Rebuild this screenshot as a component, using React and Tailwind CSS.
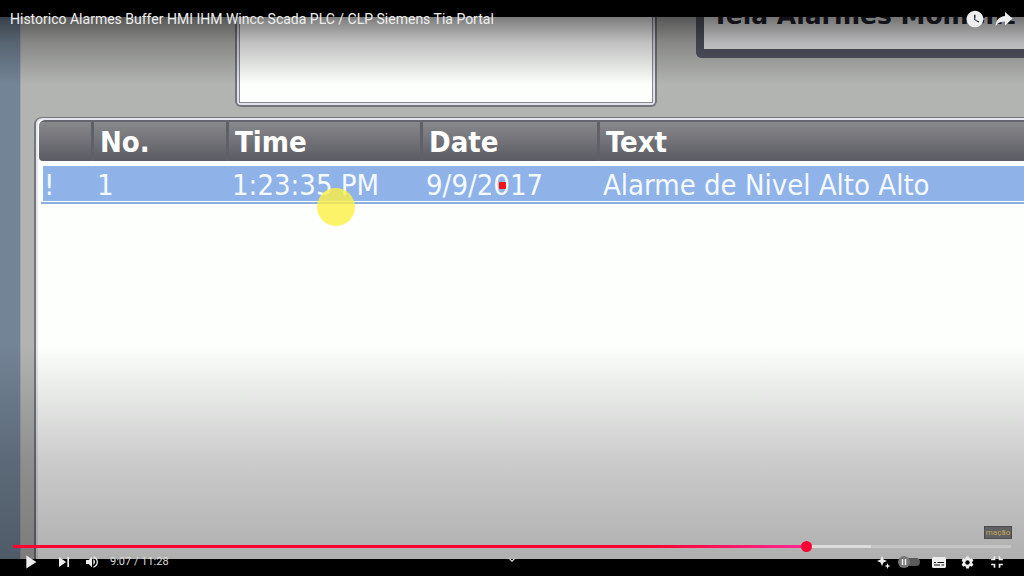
import React, { useState } from 'react';
import { MdSkipNext, MdVolumeUp, MdSettings, MdFullscreenExit, MdPlayArrow, MdWatchLater, MdOutlineKeyboardArrowDown } from 'react-icons/md';

const columns = [
  { label: '', width: 'w-[52px]' },
  { label: 'No.', width: 'w-[135px]' },
  { label: 'Time', width: 'w-[194px]' },
  { label: 'Date', width: 'w-[177px]' },
  { label: 'Text', width: '' },
];

const alarms = [['!', '1', '1:23:35 PM', '9/9/2017', 'Alarme de Nivel Alto Alto']];

function AlarmTable() {
  return (
    <div className="ml-[13px] flex-1 rounded-tl-lg border-t border-l-2 border-[#74767c] bg-[#74767c]">
      <div className="h-full rounded-tl-md border-t-2 border-l-2 border-[#e6e6ee] bg-[#fdfffd] pl-px">
        <div className="h-full rounded-tl-md border-t-2 border-[#66676e]">
          <table className="w-full table-fixed border-separate border-spacing-0 text-left text-[29px] whitespace-nowrap">
            <thead className="leading-[37px] text-white">
              <tr>
                {columns.map((col, i) => (
                  <th
                    key={i}
                    scope="col"
                    className={`bg-linear-to-b from-[#88898c] to-[#5b5b63] p-0 pt-[2px] font-bold ${col.width} ${
                      i === 0 ? 'rounded-tl-sm rounded-bl-sm' : 'border-l-3 border-[#606168] pl-[6px]'
                    }`}
                  >
                    {col.label}
                  </th>
                ))}
              </tr>
            </thead>
            <tbody className="leading-[32px] text-[#f4faff]">
              {alarms.map((row) => (
                <tr key={row[1]}>
                  {row.map((cell, i) => (
                    <td
                      key={i}
                      className={`border-t-5 border-[#fdfffd] bg-[#8fb3e8] p-0 pt-[3px] ${
                        i === 0 ? 'border-l-4 pl-[1px]' : 'pl-[6px]'
                      }`}
                    >
                      {cell}
                    </td>
                  ))}
                </tr>
              ))}
            </tbody>
          </table>
          <div className="mt-[1px] ml-[2px] h-[2px] bg-[#8eafdc]" />
        </div>
      </div>
    </div>
  );
}

function Scene() {
  return (
    <div className="relative flex h-full overflow-hidden bg-[#b2b4b1] font-['DejaVu_Sans_Condensed','DejaVu_Sans',sans-serif]">
      <div className="w-[21px] shrink-0 border-r border-[#98a4b4] bg-[#738496]" />
      <div className="flex min-w-0 flex-1 flex-col">
        <div className="flex h-[100px] shrink-0 items-start">
          <div className="ml-[214px] h-[90px] w-[422px] shrink-0 rounded-b-md border-2 border-t-0 border-[#73747c] bg-[#e2e2ea] px-[2px] pb-[2px]">
            <div className="h-full border border-t-0 border-[#888990] bg-[#fdfffd]" />
          </div>
          <div className="ml-[39px] flex h-[41px] flex-1 items-end rounded-bl-md border-b-9 border-l-8 border-[#565665] bg-[#f0f0f2] pl-[8px]">
            <span className="font-['DejaVu_Sans',sans-serif] text-[25px] leading-[66px] font-bold whitespace-nowrap text-[#22222e]">
              Tela Alarmes Moment
            </span>
          </div>
        </div>
        <AlarmTable />
      </div>
      {/* mouse highlight and laser dot */}
      <div className="absolute top-[171px] left-[317px] size-[38px] rounded-full bg-[#fdf044]/80" />
      <div className="absolute top-[165px] left-[499px] size-[7px] rounded-[1px] bg-[#f81414]" />
    </div>
  );
}

function SparkleIcon() {
  return (
    <svg viewBox="0 0 14 14" className="size-[14px]" fill="currentColor">
      <path d="M5 1 6.500 4.500 10 6 6.500 7.500 5 11 3.500 7.500 0 6 3.500 4.500Z" />
      <path d="m10.500 8 .8 2.200 2.200.8-2.200.8-.8 2.200-.8-2.200-2.200-.8 2.200-.8Z" />
    </svg>
  );
}

function ShareIcon() {
  return (
    <svg viewBox="0 0 18 16" className="h-[16px] w-[18px]" fill="currentColor">
      <path d="M10 1v4C4.500 5.500 1 9 0.500 15 3 11.500 6 10.500 10 10.500v4L17.500 7.500Z" />
    </svg>
  );
}

function SubtitlesIcon() {
  return (
    <svg viewBox="0 0 14 11" className="h-[11px] w-[14px]">
      <rect width="14" height="11" rx="1.500" fill="currentColor" />
      <path d="M2 5.500h2M5.500 5.500h6.500M2 8h6M9.500 8h2.500" stroke="#111" strokeWidth="1.200" />
    </svg>
  );
}

export default function App() {
  const [time, setTime] = useState(549);

  return (
    <div className="relative h-screen overflow-hidden bg-black py-[17px] font-[Roboto,sans-serif] text-[#eee]">
      <Scene />
      <div className="absolute inset-0 flex flex-col">
        <header className="flex h-[84px] items-start bg-linear-to-b from-black/70 via-black/25 to-transparent pt-[9px] pr-[11px] pl-[10px]">
          <h1 className="flex-1 text-[14px] leading-[20px]">
            Historico Alarmes Buffer HMI IHM Wincc Scada PLC / CLP Siemens Tia Portal
          </h1>
          <div className="flex items-center gap-[10px]">
            <button aria-label="Watch later">
              <MdWatchLater className="size-[20px]" />
            </button>
            <button aria-label="Share">
              <ShareIcon />
            </button>
          </div>
        </header>
        <div className="flex-1" />
        <footer className="flex h-[232px] flex-col justify-end bg-linear-to-b from-transparent via-black/20 to-black/33">
          <div className="mr-[12px] mb-[2px] flex h-[13px] w-[28px] items-center justify-center self-end border border-[#4c4c4c] bg-[#606163] text-[8px] leading-none text-[#c4a65a]">
            mação
          </div>
          <input
            type="range"
            aria-label="Seek"
            min="0"
            max="688"
            value={time}
            onChange={(e) => setTime(Number(e.target.value))}
            className="mx-[13px] h-[11px] appearance-none bg-[linear-gradient(90deg,#ff0033_64%,#ff2791_79%,#dcdcdc_79%,#dcdcdc_86%,#c4c6c4_86%)] bg-size-[100%_3px] bg-center bg-no-repeat [&::-webkit-slider-thumb]:size-[11px] [&::-webkit-slider-thumb]:appearance-none [&::-webkit-slider-thumb]:rounded-full [&::-webkit-slider-thumb]:bg-[#ff0033]"
          />
          <div className="grid h-[24px] grid-cols-[1fr_auto_1fr] items-start px-[17px]">
            <div className="flex h-[20px] items-center pl-[2px]">
              <button aria-label="Play">
                <MdPlayArrow className="size-[22px]" />
              </button>
              <button aria-label="Next" className="ml-[13px]">
                <MdSkipNext className="size-[20px]" />
              </button>
              <button aria-label="Mute" className="ml-[10px]">
                <MdVolumeUp className="size-[16px]" />
              </button>
              <span className="ml-[10px] text-[11px] leading-[20px] text-[#ddd]">9:07 / 11:28</span>
            </div>
            <button aria-label="More videos" className="pt-[2px]">
              <MdOutlineKeyboardArrowDown className="size-[12px]" />
            </button>
            <div className="flex h-[20px] items-center justify-end">
              <button aria-label="Ask">
                <SparkleIcon />
              </button>
              <button role="switch" aria-checked="false" aria-label="Autoplay" className="ml-[7px]">
                <svg viewBox="0 0 22 12" className="h-[12px] w-[22px]">
                  <rect x="4" y="2" width="18" height="8" rx="4" fill="#5a5a5a" />
                  <circle cx="6" cy="6" r="6" fill="#777" />
                  <path d="M4.500 3v6M7.500 3v6" stroke="#eee" strokeWidth="1.500" />
                </svg>
              </button>
              <button aria-label="Subtitles" className="ml-[12px]">
                <SubtitlesIcon />
              </button>
              <button aria-label="Settings" className="ml-[14px]">
                <MdSettings className="size-[15px]" />
              </button>
              <button aria-label="Exit full screen" className="ml-[12px]">
                <MdFullscreenExit className="size-[20px]" />
              </button>
            </div>
          </div>
        </footer>
      </div>
    </div>
  );
}
